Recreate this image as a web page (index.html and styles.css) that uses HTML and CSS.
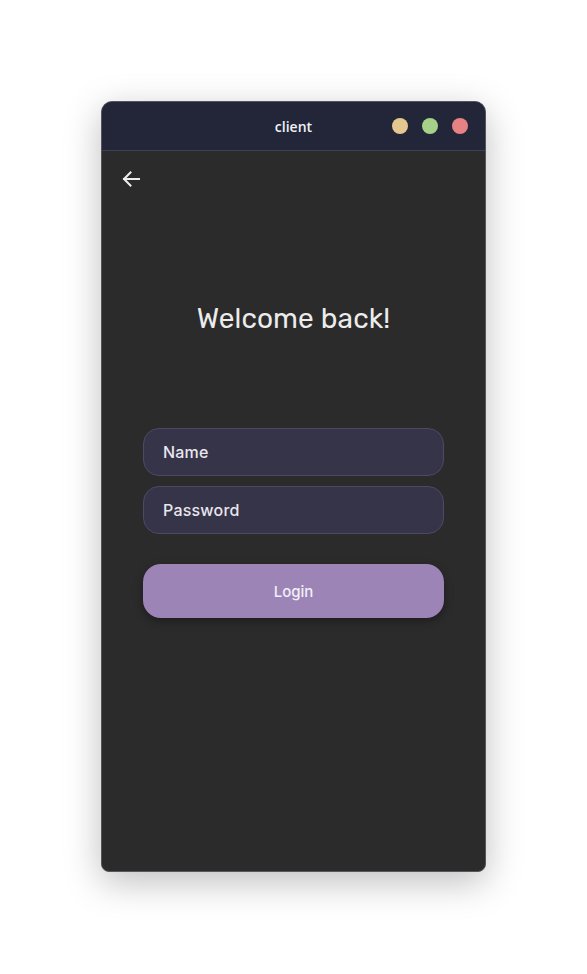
FILE: index.html
```html
<!DOCTYPE html>
<html>
<head>
<meta charset="utf-8">
<link rel="stylesheet" href="styles.css">
</head>
<body>
<div class="window">
  <div class="titlebar">
    <span class="title">client</span>
    <div class="controls">
      <span class="dot yellow"></span>
      <span class="dot green"></span>
      <span class="dot red"></span>
    </div>
  </div>
  <div class="content">
    <div class="back">
      <svg width="18" height="16" viewBox="0 0 18 16"><path d="M17 8H2M8.5 1.5L2 8l6.5 6.5" fill="none" stroke="#eeeeee" stroke-width="2" stroke-linecap="square"/></svg>
    </div>
    <h1 class="heading">Welcome back!</h1>
    <div class="form">
      <div class="field">Name</div>
      <div class="field">Password</div>
      <div class="button">Login</div>
    </div>
  </div>
</div>
</body>
</html>
```
FILE: styles.css
```css
html, body { margin: 0; padding: 0; }
body {
  width: 587px;
  height: 974px;
  background: #ffffff;
  font-family: Inter, "Noto Sans", sans-serif;
  padding: 101px 0 0 101px;
  box-sizing: border-box;
}
.window {
  width: 385px;
  height: 771px;
  box-sizing: border-box;
  border: 1px solid #55555f;
  border-radius: 11px 11px 8px 8px;
  overflow: hidden;
  background: #2b2b2b;
  box-shadow: 0 10px 36px rgba(0,0,0,0.26);
  display: flex;
  flex-direction: column;
}
.titlebar {
  height: 48px;
  background: #222638;
  border-bottom: 1px solid #3f4150;
  display: flex;
  align-items: center;
  justify-content: center;
  position: relative;
  flex-shrink: 0;
}
.title {
  color: #f0f2f8;
  font-family: "Open Sans", "Noto Sans", sans-serif;
  font-weight: 600;
  font-size: 14px;
}
.controls {
  position: absolute;
  right: 17px;
  top: 16px;
  display: flex;
  gap: 14px;
}
.dot { width: 16px; height: 16px; border-radius: 50%; display: block; }
.yellow { background: #e5c890; }
.green { background: #a6d189; }
.red { background: #e78284; }
.content {
  flex: 1;
  display: flex;
  flex-direction: column;
  align-items: center;
  position: relative;
}
.back {
  position: absolute;
  left: 20px;
  top: 20px;
  width: 18px;
  height: 16px;
}
.back svg { display: block; }
.heading {
  margin: 151px 0 0 0;
  font-family: Rubik, Inter, "Noto Sans", sans-serif;
  font-weight: 400;
  font-size: 28px;
  color: #ececec;
  line-height: 34px;
  letter-spacing: 0.1px;
}
.form {
  margin-top: 92px;
  width: 301px;
  display: flex;
  flex-direction: column;
  gap: 10px;
}
.field {
  height: 48px;
  box-sizing: border-box;
  border: 1px solid #4d4866;
  border-radius: 16px;
  background: #363448;
  color: #e8e6ee;
  font-size: 16px;
  font-weight: 500;
  display: flex;
  align-items: center;
  padding-left: 19px;
  padding-bottom: 1px;
  letter-spacing: 0.2px;
}
.button {
  margin-top: 20px;
  height: 54px;
  border-radius: 18px;
  background: #9d84b7;
  color: #f2eef6;
  font-size: 15px;
  font-weight: 500;
  display: flex;
  align-items: center;
  justify-content: center;
  box-shadow: 0 3px 8px rgba(0,0,0,0.35);
}
```
